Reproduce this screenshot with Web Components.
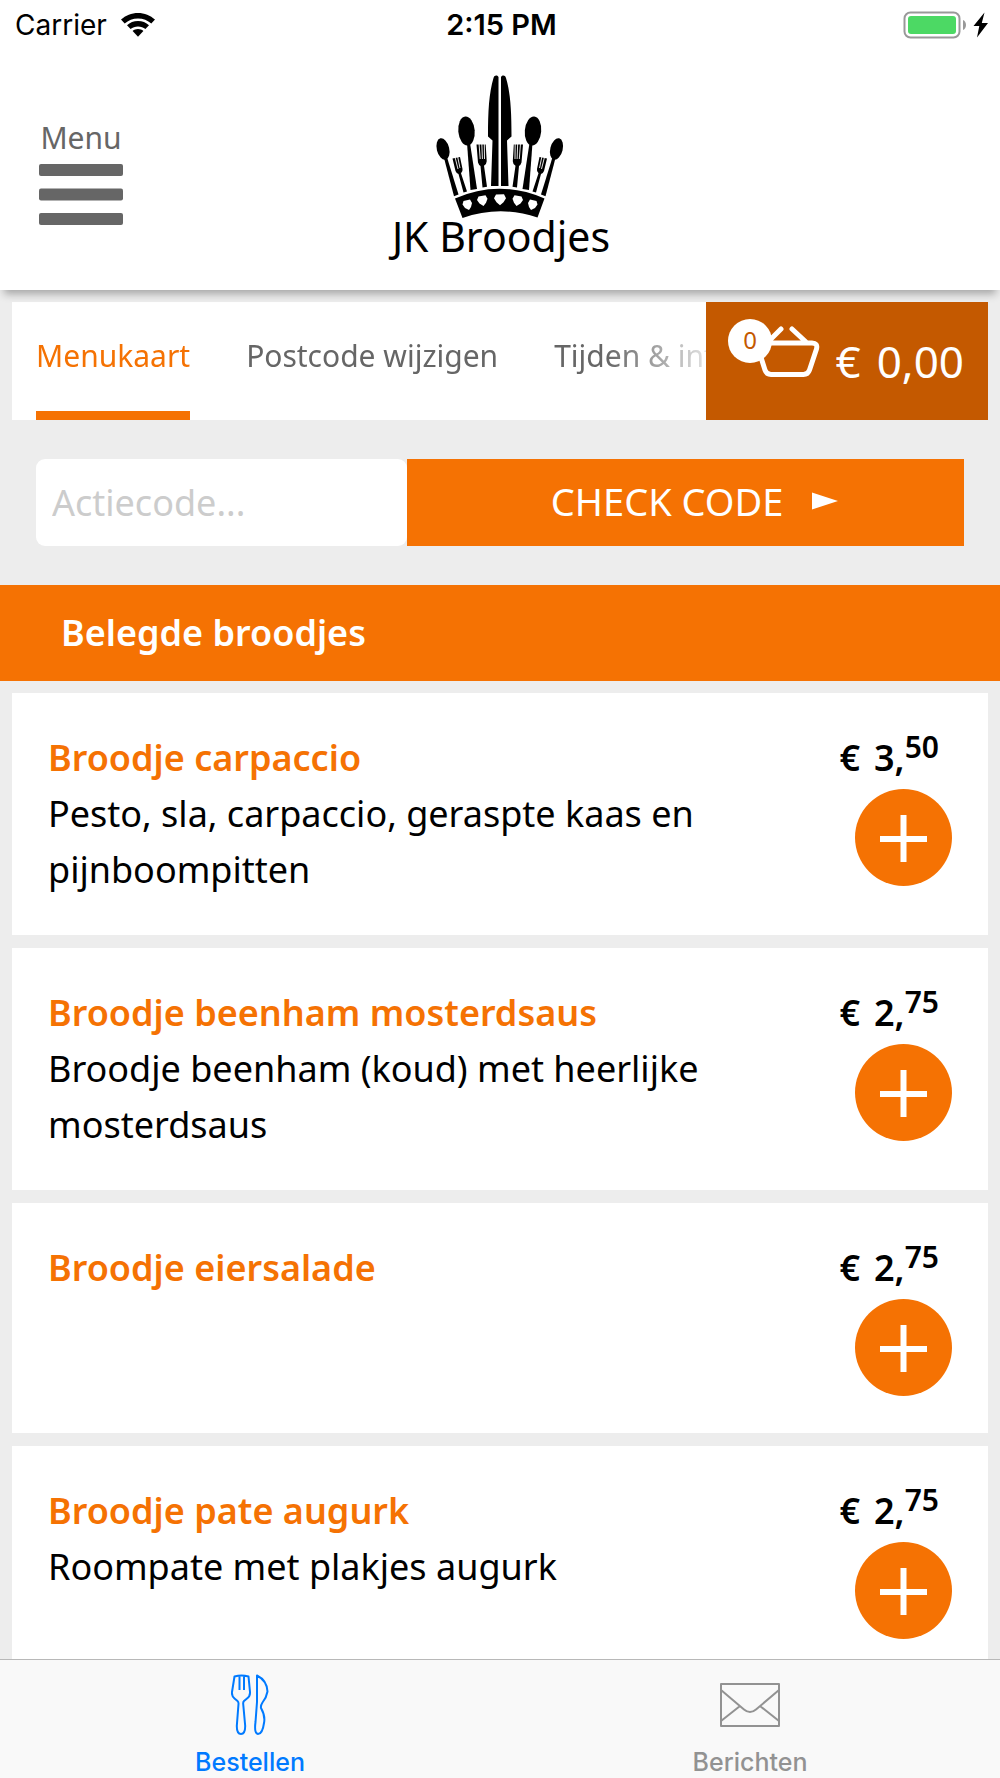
<!DOCTYPE html>
<html lang="nl">
<head>
<meta charset="utf-8">
<meta name="viewport" content="width=device-width, initial-scale=1">
<title>JK Broodjes</title>
<style>
  body {
    margin: 0;
    background: #ededed;
    color: #000;
    font-family: "Noto Sans", sans-serif;
    --orange: #f57203;
    --orange-dark: #c45900;
    --grey: #666;
    --system-font: Inter, sans-serif;
  }
</style>
</head>
<body>
<order-app>
  <app-header slot="header"></app-header>
  <menu-tabs></menu-tabs>
  <promo-form></promo-form>
  <menu-category name="Belegde broodjes">
    <menu-item name="Broodje carpaccio" euros="3" cents="50">Pesto, sla, carpaccio, geraspte kaas en pijnboompitten</menu-item>
    <menu-item name="Broodje beenham mosterdsaus" euros="2" cents="75">Broodje beenham (koud) met heerlijke mosterdsaus</menu-item>
    <menu-item name="Broodje eiersalade" euros="2" cents="75"></menu-item>
    <menu-item name="Broodje pate augurk" euros="2" cents="75">Roompate met plakjes augurk</menu-item>
  </menu-category>
  <tab-bar slot="footer"></tab-bar>
</order-app>

<script>
class OrderApp extends HTMLElement {
  constructor() {
    super();
    this.attachShadow({ mode: 'open' });
    this.shadowRoot.innerHTML = `
      <style>
        :host {
          display: flex;
          flex-direction: column;
          height: 100vh;
        }
        main {
          flex: 1;
          min-height: 0;
          overflow-y: auto;
          scrollbar-width: none;
        }
      </style>
      <slot name="header"></slot>
      <main><slot></slot></main>
      <slot name="footer"></slot>
    `;
  }
}

class StatusBar extends HTMLElement {
  constructor() {
    super();
    this.attachShadow({ mode: 'open' });
    this.shadowRoot.innerHTML = `
      <style>
        :host {
          display: grid;
          grid-template-columns: 1fr auto 1fr;
          align-items: center;
          height: 50px;
          padding: 0 12px 0 15px;
          font: 400 28px/32px var(--system-font);
        }
        div {
          display: flex;
          align-items: center;
          gap: 14px;
        }
        .right {
          justify-content: flex-end;
          gap: 0;
        }
        time {
          font-size: 29px;
          font-weight: 600;
        }
        svg {
          display: block;
        }
      </style>
      <div>
        <span>Carrier</span>
        <svg width="34" height="26" viewBox="0 0 34 26">
          <path d="M17 1C10.600 1 4.600 3.500 0 7.600l3.700 4C7.300 8.400 11.900 6.500 17 6.500s9.700 1.900 13.300 5.100l3.700-4C29.400 3.500 23.400 1 17 1z"/>
          <path d="M17 9c-4.200 0-8.100 1.600-11 4.200l3.600 3.900c2-1.700 4.500-2.700 7.400-2.700s5.400 1 7.400 2.700l3.600-3.900C25.100 10.600 21.200 9 17 9z"/>
          <path d="M17 17c-2 0-3.900.7-5.400 1.900L17 24.800l5.400-5.900C20.900 17.700 19 17 17 17z"/>
        </svg>
      </div>
      <time>2:15 PM</time>
      <div class="right">
        <svg width="86" height="28" viewBox="0 0 86 28">
          <rect x="2.500" y="1.500" width="55" height="25" rx="6" fill="#fff" stroke="#999" stroke-width="2"/>
          <rect x="6" y="5" width="48" height="18" rx="3" fill="#4cd964"/>
          <path d="M61 9c4 1.500 4 8.500 0 10z" fill="#999"/>
          <path d="M82.500 1.500L71.500 15h5.800L75 26.500 86 12h-6.200z"/>
        </svg>
      </div>
    `;
  }
}

class BrandLogo extends HTMLElement {
  constructor() {
    super();
    this.attachShadow({ mode: 'open' });
    this.shadowRoot.innerHTML = `
      <style>
        :host, svg {
          display: block;
        }
        text {
          font: 400 41px "Noto Sans", sans-serif;
        }
      </style>
      <svg width="240" height="205" viewBox="0 0 240 205" role="img" aria-label="JK Broodjes">
        <defs>
          <g id="half">
            <path d="M118.500 12c-1.500-2-4-2-5 1-4.500 15-5.500 33-5.500 58.500l4.500 4L111 121h7.500z"/>
            <ellipse cx="86.500" cy="66" rx="8.200" ry="14.500" transform="rotate(-5 86.500 66)"/>
            <path d="M87 78h3l7 46-6.500 1z"/>
            <ellipse cx="63" cy="84" rx="6.200" ry="11" transform="rotate(-14 63 84)"/>
            <path d="M64 93l3-.8 11.500 37.300-4.500 1.700z"/>
            <path d="M96.500 79.500l1.500 18q1 3 2.500 3.500l2 21.500 4.500-.8-3-21q2.500-1 2.700-4.500l-1-16.700z"/>
            <path d="M72.500 93.500l3 12.500q1 2.500 3 3l5 18.500 3.500-1-6-18.300q2-1.700 1.500-4.200L80 92z"/>
            <path d="M99 78l1.200 16M101.800 78l.6 16M104.300 78l.2 16M75 92l3 12M77.500 91l2.500 12" stroke="#fff" stroke-width=".9"/>
          </g>
        </defs>
        <use href="#half"/>
        <use href="#half" transform="matrix(-1 0 0 1 239.500 0)"/>
        <path d="M75 133.500Q119 114 164.500 133.500L157.500 152.500Q120 140 82.500 153z"/>
        <path fill="#fff" d="M116 129.500l8-.2 2 4-2.500 4-3.500 3-3.500-3-2.500-4zM98.500 131.500l7-1.200 2 3.500-1.500 4-2.500 3.200-4-2.500-2.500-3.500zM141.500 131.500l-7-1.200-2 3.500 1.500 4 2.500 3.200 4-2.500 2.500-3.500zM83.500 136l6.500-1.500 2 3.500-1 4-2 3-4-2-2.500-3.500zM156.500 136l-6.500-1.500-2 3.500 1 4 2 3 4-2 2.500-3.500z"/>
        <text x="121" y="187" text-anchor="middle">JK Broodjes</text>
      </svg>
    `;
  }
}

class AppHeader extends HTMLElement {
  constructor() {
    super();
    this.attachShadow({ mode: 'open' });
    this.shadowRoot.innerHTML = `
      <style>
        :host {
          display: block;
          position: relative;
          z-index: 1;
          background: #fff;
          box-shadow: 0 8px 8px -4px rgba(0, 0, 0, .3);
        }
        header {
          display: grid;
          grid-template-columns: 1fr auto 1fr;
          align-items: start;
          padding: 15px 39px 20px;
        }
        button {
          justify-self: start;
          display: grid;
          justify-items: center;
          gap: 6px;
          margin-top: 53px;
          padding: 0;
          border: 0;
          background: none;
          color: var(--grey);
          font: 400 30px/40px "Noto Sans", sans-serif;
        }
        svg {
          display: block;
        }
      </style>
      <status-bar></status-bar>
      <header>
        <button type="button">
          Menu
          <svg width="84" height="61" viewBox="0 0 84 61" fill="currentColor">
            <rect width="84" height="12" rx="2"/>
            <rect y="24.500" width="84" height="12" rx="2"/>
            <rect y="49" width="84" height="12" rx="2"/>
          </svg>
        </button>
        <brand-logo></brand-logo>
      </header>
    `;
  }
}

class MenuTabs extends HTMLElement {
  constructor() {
    super();
    this.attachShadow({ mode: 'open' });
    this.shadowRoot.innerHTML = `
      <style>
        :host {
          display: flex;
          height: 118px;
          margin: 12px 12px 0;
          background: #fff;
        }
        nav {
          display: flex;
          flex: 1;
          gap: 56px;
          min-width: 0;
          overflow: hidden;
          padding-left: 24px;
          mask-image: linear-gradient(to left, rgba(0, 0, 0, .2), #000 100px);
        }
        nav a {
          box-sizing: border-box;
          height: 118px;
          border-bottom: 9px solid transparent;
          color: var(--grey);
          font-size: 30px;
          line-height: 108px;
          text-decoration: none;
          white-space: nowrap;
        }
        nav a.active {
          border-color: var(--orange);
          color: var(--orange);
        }
      </style>
      <nav>
        <a class="active" href="#menukaart">Menukaart</a>
        <a href="#postcode">Postcode wijzigen</a>
        <a href="#info">Tijden &amp; info</a>
      </nav>
      <cart-button></cart-button>
    `;
  }
}

class CartButton extends HTMLElement {
  constructor() {
    super();
    this.attachShadow({ mode: 'open' });
    this.shadowRoot.innerHTML = `
      <style>
        :host {
          display: flex;
        }
        button {
          display: flex;
          align-items: flex-start;
          justify-content: space-between;
          width: 282px;
          padding: 17px 24px 0 22px;
          border: 0;
          background: var(--orange-dark);
          color: #fff;
          font: 400 44px/84px "Noto Sans", sans-serif;
          white-space: nowrap;
        }
        .basket {
          position: relative;
        }
        .total {
          display: flex;
          gap: 16px;
        }
        svg {
          display: block;
        }
        .count {
          position: absolute;
          top: 0;
          left: 0;
          width: 44px;
          height: 44px;
          border-radius: 50%;
          background: #fff;
          color: var(--orange-dark);
          font-size: 24px;
          line-height: 42px;
        }
      </style>
      <button type="button">
        <span class="basket">
          <svg width="93" height="62" viewBox="0 0 93 62" fill="none" stroke="#fff" stroke-width="5" stroke-linecap="round" stroke-linejoin="round">
            <path d="M36 24h48q6 0 4.500 6l-7 21q-1.500 4.500-6 4.500H43q-4.500 0-6-4.500l-7-22M53 10L39 24M64 10l14 13"/>
          </svg>
          <span class="count">0</span>
        </span>
        <span class="total"><span>€</span> <span>0,00</span></span>
      </button>
    `;
  }
}

class PromoForm extends HTMLElement {
  constructor() {
    super();
    this.attachShadow({ mode: 'open' });
    this.shadowRoot.innerHTML = `
      <style>
        :host {
          display: block;
          padding: 39px 36px;
        }
        form {
          display: grid;
          grid-template-columns: 2fr 3fr;
          height: 87px;
        }
        input, button {
          box-sizing: border-box;
          min-width: 0;
          margin: 0;
          border: 0;
          font: 400 36px "Noto Sans", sans-serif;
        }
        input {
          padding: 0 16px;
          border-radius: 9px;
          background: #fff;
        }
        input::placeholder {
          color: #ccc;
          opacity: 1;
        }
        button {
          display: flex;
          align-items: center;
          justify-content: center;
          gap: 29px;
          padding: 0 0 4px 18px;
          background: var(--orange);
          color: #fff;
          font-size: 38px;
        }
      </style>
      <form>
        <input type="text" aria-label="Actiecode" placeholder="Actiecode...">
        <button type="button">
          CHECK CODE
          <svg width="26" height="18" viewBox="0 0 26 18" fill="currentColor"><path d="M0 .5L26 9 0 17.500z"/></svg>
        </button>
      </form>
    `;
  }
}

class MenuCategory extends HTMLElement {
  constructor() {
    super();
    this.attachShadow({ mode: 'open' });
  }

  connectedCallback() {
    this.shadowRoot.innerHTML = `
      <style>
        :host {
          display: block;
        }
        h2 {
          margin: 0;
          padding: 20px 61px;
          background: var(--orange);
          color: #fff;
          font-size: 36px;
          font-weight: 650;
          line-height: 56px;
        }
        .items {
          display: grid;
          gap: 13px;
          padding: 12px;
        }
      </style>
      <h2>${this.getAttribute('name')}</h2>
      <div class="items"><slot></slot></div>
    `;
  }
}

class MenuItem extends HTMLElement {
  constructor() {
    super();
    this.attachShadow({ mode: 'open' });
  }

  connectedCallback() {
    const name = this.getAttribute('name');
    this.shadowRoot.innerHTML = `
      <style>
        :host {
          display: flex;
          justify-content: space-between;
          gap: 40px;
          padding: 37px 36px;
          background: #fff;
          font-size: 36px;
          line-height: 56px;
        }
        .text {
          flex: 1;
          max-width: 700px;
        }
        h3, p {
          margin: 0;
          font-size: inherit;
        }
        h3 {
          color: var(--orange);
          font-weight: 650;
        }
        .order {
          display: flex;
          flex-direction: column;
          align-items: flex-end;
          gap: 3px;
        }
        .price {
          display: flex;
          gap: 14px;
          height: 56px;
          padding-right: 13px;
          font-weight: 650;
          white-space: nowrap;
        }
        sup {
          font-size: 30px;
          line-height: 0;
        }
        button {
          display: grid;
          place-items: center;
          width: 97px;
          height: 97px;
          padding: 0;
          border: 0;
          border-radius: 50%;
          background: var(--orange);
        }
      </style>
      <div class="text">
        <h3>${name}</h3>
        <p><slot></slot></p>
      </div>
      <div class="order">
        <div class="price"><span>€</span> <span>${this.getAttribute('euros')},<sup>${this.getAttribute('cents')}</sup></span></div>
        <button type="button" aria-label="${name} toevoegen">
          <svg width="49" height="49" viewBox="0 0 49 49" stroke="#fff" stroke-width="6"><path d="M24.500 2v47M1 26h47"/></svg>
        </button>
      </div>
    `;
  }
}

class TabBar extends HTMLElement {
  constructor() {
    super();
    this.attachShadow({ mode: 'open' });
    this.shadowRoot.innerHTML = `
      <style>
        nav {
          display: grid;
          grid-template-columns: 1fr 1fr;
          border-top: 1px solid #b8b8b8;
          background: #f9f9f9;
          font: 450 25px/28px var(--system-font);
        }
        a {
          display: flex;
          flex-direction: column;
          align-items: center;
          gap: 12px;
          padding: 14px 0 2px;
          color: #929292;
          text-decoration: none;
        }
        a.active {
          color: #007aff;
        }
        svg {
          fill: none;
          stroke: currentColor;
          stroke-width: 2;
          stroke-linejoin: round;
        }
      </style>
      <nav>
        <a class="active" href="#bestellen">
          <svg width="38" height="62" viewBox="0 0 38 62">
            <path d="M3.500 2.500Q10.500 .5 17.500 2.500L19 18q.3 4-3 6.500l-3 2.500q-1 1-.8 3l2 22q0 8-4.200 8t-4.200-8l1.700-22q.2-2-1-3l-3-2.500q-3-2.500-2.500-6.500zM8.500 2v14M13 2v14M26 1.500q10 5 10.500 16-1 6-5 11-2 3-1.500 5.500 4.500 8 3 15-1.500 11-6 11-4-1-2.500-12L26 28z"/>
          </svg>
          Bestellen
        </a>
        <a href="#berichten">
          <svg width="62" height="62" viewBox="0 0 62 62">
            <path d="M2 10h58v42H2zM2 16l23 19.500q6 5 12 0L60 16M2 47l19-15M60 47L41 32"/>
          </svg>
          Berichten
        </a>
      </nav>
    `;
  }
}

customElements.define('order-app', OrderApp);
customElements.define('status-bar', StatusBar);
customElements.define('brand-logo', BrandLogo);
customElements.define('app-header', AppHeader);
customElements.define('menu-tabs', MenuTabs);
customElements.define('cart-button', CartButton);
customElements.define('promo-form', PromoForm);
customElements.define('menu-category', MenuCategory);
customElements.define('menu-item', MenuItem);
customElements.define('tab-bar', TabBar);
</script>
</body>
</html>
